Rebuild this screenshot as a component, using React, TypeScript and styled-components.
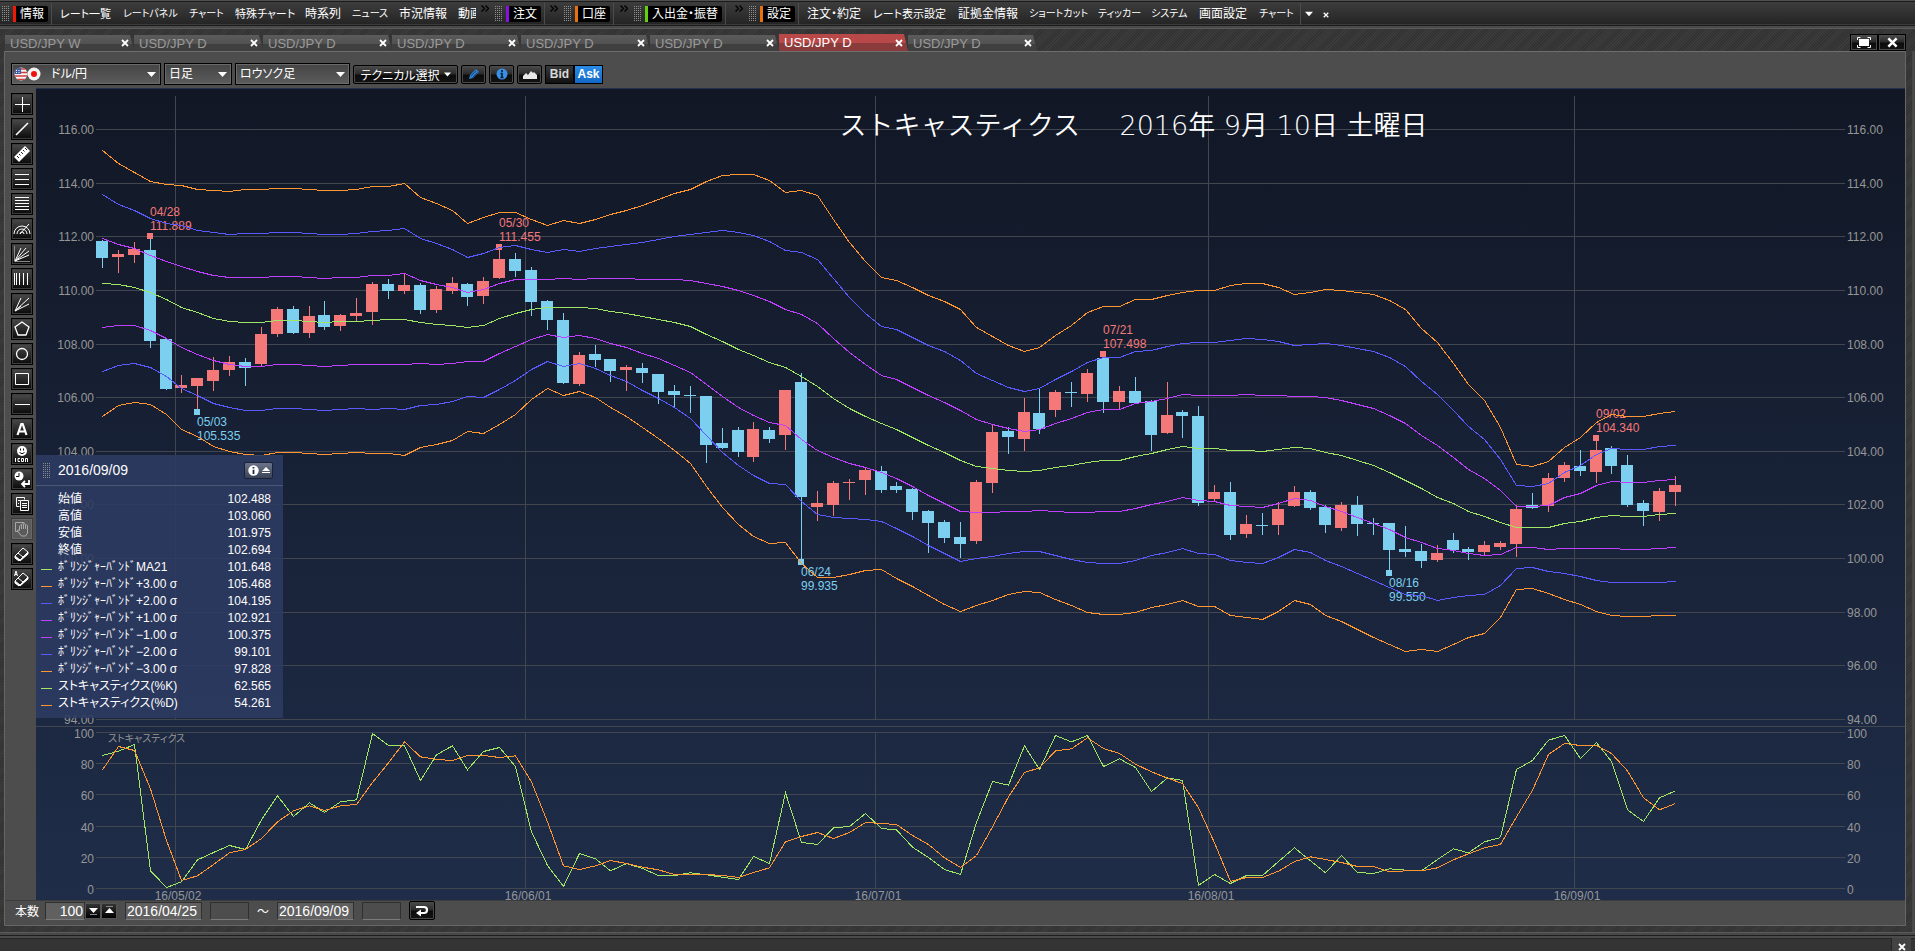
import React, { useLayoutEffect, useRef, useState } from 'react';
import styled, { createGlobalStyle, css } from 'styled-components';

const UI_FONT = '"Liberation Sans", "Noto Sans CJK JP", sans-serif';

const GlobalStyle = createGlobalStyle`
  * { box-sizing: border-box; }
  body {
    margin: 0;
    background: #3a3a3a;
    color: #fff;
    font-family: ${UI_FONT};
    font-size: 12px;
    overflow: hidden;
  }
  button, input, select {
    font-family: inherit;
    font-size: inherit;
    color: inherit;
    margin: 0;
    padding: 0;
    border: 0;
    border-radius: 0;
    background: none;
  }
`;

const hatch = css`
  background: repeating-linear-gradient(135deg, #323232 0 1px, #3c3c3c 1px 2px);
`;

const glossy = css`
  background: linear-gradient(#4b4b4b, #2a2a2a 48%, #0c0c0c 52%, #141414);
  border: 1px solid #000;
  box-shadow: inset 0 0 0 1px #4a4a4a;
`;

const Page = styled.div`
  display: flex;
  flex-direction: column;
  min-height: 100vh;
`;

/* ---------- menu bar ---------- */

const MenuBar = styled.nav`
  display: flex;
  align-items: center;
  height: 28px;
  background: linear-gradient(#505050 0 1px, #1c1c1c 1px 2px, #3d3d3d 2px, #252525 24px, #3a3a3a 24px 25px, #1c1c1c 25px 26px, #4a4a4a 26px);
  padding-bottom: 1px;
`;

const MenuGroup = styled.div<{ $width?: number }>`
  display: flex;
  align-items: center;
  height: 100%;
  width: ${(p) => (p.$width ? `${p.$width}px` : 'auto')};
`;

const Handle = styled.span`
  flex: none;
  width: 7px;
  height: 15px;
  margin: 0 4px 0 2px;
  background: conic-gradient(from 270deg at 1px 1px, #8c8c8c 90deg, transparent 0) 0 0 / 2px 2px;
`;

const GroupTitle = styled.button<{ $accent: string }>`
  flex: none;
  height: 16px;
  padding: 0 4px;
  background: #000;
  border-left: 3px solid ${(p) => p.$accent};
  border-radius: 0 2px 2px 0;
  line-height: 16px;
  font-feature-settings: 'palt';
  white-space: nowrap;
`;

const Divider = styled.span`
  flex: none;
  width: 1px;
  height: 22px;
  margin-left: 3px;
  background: #4c4c4c;
`;

const MenuItems = styled.div`
  display: flex;
  padding-left: 8px;
`;

const MenuItem = styled.button<{ $width: number; $size: number; $clip?: boolean }>`
  width: ${(p) => p.$width}px;
  overflow: ${(p) => (p.$clip ? 'hidden' : 'visible')};
  text-align: left;
  font-size: ${(p) => p.$size}px;
  line-height: 16px;
  white-space: nowrap;
  font-feature-settings: 'palt';
`;

const Chevron = styled.button`
  margin: 0 4px 10px auto;
  width: 8px;
  height: 8px;
  svg { display: block; }
`;

const MenuTail = styled.div`
  display: flex;
  align-items: center;
  gap: 10px;
  padding-left: 4px;
`;

/* ---------- tabs ---------- */

const TabStrip = styled.div`
  ${hatch}
  display: flex;
  align-items: flex-end;
  height: 23px;
  padding: 0 9px 0 5px;
  border-top: 1px solid #5a5a5a;
`;

const Tab = styled.div<{ $active: boolean }>`
  display: flex;
  align-items: center;
  justify-content: space-between;
  width: 129px;
  height: ${(p) => (p.$active ? 17 : 16)}px;
  padding: 0 4px 0 5px;
  color: ${(p) => (p.$active ? '#fff' : '#9a9a9a')};
  background: ${(p) =>
    p.$active
      ? 'linear-gradient(#b94848 0 55%, #8a3c3c 55%)'
      : 'linear-gradient(#5b5b5b, #525252 55%, #3f3f3f 55%)'};
  clip-path: polygon(0 0, calc(100% - 4px) 0, 100% 100%, 0 100%);
  font-size: 13px;
  line-height: 16px;
`;

const TabClose = styled.button`
  width: 9px;
  height: 9px;
  svg { display: block; }
`;

const WindowButtons = styled.div`
  display: flex;
  margin-left: auto;
`;

const WindowButton = styled.button`
  ${glossy}
  display: grid;
  place-items: center;
  width: 28px;
  height: 17px;
`;

/* ---------- main panel ---------- */

const Frame = styled.main`
  ${hatch}
  display: flex;
  flex: 1;
  padding: 0 6px 6px 4px;
  border-right: 3px solid #484848;
`;

const Panel = styled.section`
  display: flex;
  flex: 1;
  flex-direction: column;
  min-width: 0;
  background: #4d4d4d;
  border: 1px solid #666;
  border-top-color: #6e6e6e;
`;

const Toolbar = styled.div`
  display: flex;
  align-items: center;
  gap: 3px;
  height: 36px;
  padding: 11px 6px 3px;
`;

const SelectBox = styled.label<{ $width: number }>`
  position: relative;
  width: ${(p) => p.$width}px;
  height: 22px;
`;

const Select = styled.select<{ $indent: number }>`
  appearance: none;
  width: 100%;
  height: 100%;
  padding: 0 20px 0 ${(p) => p.$indent}px;
  border: 1px solid #000;
  box-shadow: inset 0 0 0 1px #6a6a6a;
  background: linear-gradient(#444, #5c5c5c);
  font-feature-settings: 'palt';
  option { color: #000; }
`;

const SelectArrow = styled.svg`
  position: absolute;
  right: 5px;
  top: 9px;
  pointer-events: none;
`;

const Flags = styled.svg`
  position: absolute;
  left: 3px;
  top: 3px;
  pointer-events: none;
`;

const ToolbarButton = styled.button<{ $width: number }>`
  ${glossy}
  display: flex;
  align-items: center;
  justify-content: center;
  gap: 4px;
  width: ${(p) => p.$width}px;
  height: 19px;
  border-radius: 2px;
  font-feature-settings: 'palt';
  white-space: nowrap;
`;

const PriceSide = styled.div`
  display: flex;
`;

const SideButton = styled.button<{ $on: boolean }>`
  width: 29px;
  height: 19px;
  border: 1px solid #000;
  background: ${(p) => (p.$on ? 'linear-gradient(#2a8be6, #1268c4)' : 'linear-gradient(#3a3a3a, #101010)')};
  color: ${(p) => (p.$on ? '#fff' : '#d8d8d8')};
  font-weight: bold;
  font-size: 12px;
`;

const Workspace = styled.div`
  display: flex;
  flex: 1;
  min-height: 0;
`;

const ToolColumn = styled.div`
  display: flex;
  flex: none;
  flex-direction: column;
  gap: 3px;
  width: 31px;
  padding: 5px 3px 0 6px;
`;

const ToolButton = styled.button<{ $dim?: boolean }>`
  display: grid;
  place-items: center;
  height: 22px;
  border: 1px solid ${(p) => (p.$dim ? '#3c3c3c' : '#000')};
  background: ${(p) => (p.$dim ? '#5a5a5a' : 'linear-gradient(#4a4a4a, #0a0a0a)')};
  box-shadow: inset 0 0 0 1px ${(p) => (p.$dim ? '#686868' : '#3c3c3c')};
  color: ${(p) => (p.$dim ? '#a8a8a8' : '#fff')};
`;

const ChartArea = styled.div`
  position: relative;
  flex: 1;
  min-width: 0;
  border-top: 1px solid #22324e;
  background: linear-gradient(#111725, #1f2d49);
`;

const ChartSvg = styled.svg`
  position: absolute;
  inset: 0;
  font-family: "Liberation Sans", sans-serif;
  font-size: 12px;
`;

/* ---------- data window ---------- */

const DataWindow = styled.aside`
  position: absolute;
  left: 0;
  bottom: 182px;
  width: 247px;
  height: 263px;
  background: rgba(45, 59, 98, 0.9);
`;

const DataHeader = styled.header`
  display: flex;
  align-items: center;
  height: 31px;
  padding: 0 10px 0 5px;
  border-bottom: 1px solid #4d5875;
  font-size: 14px;
`;

const DataDate = styled.span`
  flex: 1;
  padding-left: 4px;
`;

const InfoToggle = styled.button`
  display: flex;
  align-items: center;
  justify-content: center;
  gap: 3px;
  width: 29px;
  height: 17px;
  border: 1px solid #1c2236;
  border-radius: 2px;
  background: linear-gradient(#6b7488, #3a4258);
`;

const DataTable = styled.table`
  width: 242px;
  margin: 5px 0 0 5px;
  border-collapse: collapse;
  tr { height: 17px; }
  th, td { padding: 0; line-height: 17px; }
  th { text-align: left; font-weight: normal; white-space: nowrap; font-feature-settings: 'palt'; }
  td { text-align: right; padding-right: 12px; }
`;

const DataLabel = styled.span`
  display: flex;
  align-items: center;
`;

const Swatch = styled.i<{ $color?: string }>`
  width: 11px;
  height: 1px;
  margin: 4px 6px 0 0;
  background: ${(p) => p.$color ?? 'transparent'};
`;

/* ---------- footer ---------- */

const RangeBar = styled.form`
  display: flex;
  align-items: center;
  gap: 8px;
  height: 25px;
  padding: 0 10px 5px;
  border-top: 1px solid #3c3c3c;
`;

const CountField = styled.div`
  display: flex;
  align-items: center;
`;

const CountLabel = styled.label`
  width: 30px;
`;

const Field = styled.input<{ $width: number; $right?: boolean; $blank?: boolean }>`
  width: ${(p) => p.$width}px;
  height: 18px;
  padding: 0 1px;
  border: 1px solid #303030;
  border-bottom-color: #7a7a7a;
  background: ${(p) => (p.$blank ? '#4d4d4d' : '#606060')};
  text-align: ${(p) => (p.$right ? 'right' : 'left')};
  font-size: 14px;
`;

const Spin = styled.button`
  display: grid;
  place-items: center;
  width: 16px;
  height: 16px;
  border: 1px solid #555;
  background: linear-gradient(#333, #000);
`;

const Tilde = styled.span`
  width: 12px;
  text-align: center;
`;

const ReloadButton = styled.button`
  ${glossy}
  display: grid;
  place-items: center;
  width: 26px;
  height: 19px;
  border-radius: 2px;
`;

const StatusBar = styled.footer`
  display: flex;
  align-items: flex-end;
  justify-content: flex-end;
  height: 19px;
  padding: 6px 4px 0 0;
  background: linear-gradient(#5a5a5a 0 1px, #484848 1px 3px, #1e1e1e 3px 4px, #4a4a4a 4px 6px, #262626 6px 7px, #343434 7px);
`;

const StatusClose = styled.button`
  display: grid;
  place-items: center;
  width: 20px;
  height: 13px;
  padding-top: 4px;
  border-left: 1px solid #262626;
  background: #434343;
`;

/* ---------- chart data ---------- */

type CandleRow = [kind: 'r' | 'f', bodyTop: number, bodyBottom: number, high: number, low: number];

// Levels count steps below the 116.00 line; 1770 steps span 22 yen.
// Each row is [rising or falling, body top, body bottom, high, low].
const candleRows: CandleRow[] = [
  ['f', 333, 384, 330, 413], ['r', 372, 381, 360, 429], ['r', 357, 375, 336, 399], ['f', 360, 633, 318, 654],
  ['f', 627, 777, 624, 780], ['r', 765, 774, 735, 789], ['r', 744, 768, 744, 846], ['r', 720, 753, 681, 783],
  ['r', 696, 720, 678, 738], ['f', 696, 714, 684, 768], ['r', 612, 702, 591, 708], ['r', 537, 612, 531, 621],
  ['f', 537, 609, 528, 612], ['r', 558, 609, 528, 624], ['f', 555, 591, 513, 600], ['r', 555, 588, 552, 603],
  ['r', 549, 558, 504, 573], ['r', 462, 546, 456, 585], ['f', 462, 483, 447, 507], ['r', 465, 483, 429, 492],
  ['f', 465, 540, 459, 552], ['r', 477, 540, 468, 549], ['r', 459, 483, 441, 492], ['f', 462, 501, 459, 528],
  ['r', 453, 498, 441, 522], ['r', 387, 444, 351, 447], ['f', 387, 423, 369, 441], ['f', 420, 516, 411, 558],
  ['f', 513, 570, 510, 600], ['f', 570, 759, 549, 762], ['r', 675, 762, 666, 768], ['f', 672, 690, 645, 711],
  ['f', 687, 723, 687, 756], ['r', 711, 720, 705, 783], ['f', 714, 729, 699, 759], ['f', 732, 786, 732, 822],
  ['f', 783, 795, 765, 834], ['f', 795, 798, 768, 849], ['f', 798, 945, 798, 999], ['f', 939, 954, 894, 957],
  ['f', 900, 966, 891, 981], ['r', 897, 981, 876, 996], ['f', 900, 927, 891, 939], ['r', 780, 915, 780, 960],
  ['f', 756, 1101, 729, 1290], ['r', 1119, 1131, 1083, 1173], ['r', 1059, 1125, 1053, 1158], ['r', 1056, 1059, 1047, 1110],
  ['r', 1020, 1050, 1014, 1095], ['f', 1023, 1080, 1008, 1089], ['f', 1068, 1080, 1056, 1089], ['f', 1077, 1146, 1074, 1170],
  ['f', 1143, 1179, 1140, 1269], ['f', 1176, 1224, 1170, 1239], ['f', 1221, 1242, 1176, 1284], ['r', 1056, 1233, 1050, 1242],
  ['r', 906, 1059, 885, 1089], ['f', 903, 921, 891, 972], ['r', 846, 927, 804, 963], ['f', 849, 897, 774, 912],
  ['r', 786, 840, 780, 861], ['f', 786, 789, 756, 831], ['r', 729, 792, 717, 816], ['f', 684, 816, 675, 849],
  ['r', 783, 816, 768, 837], ['f', 783, 819, 741, 822], ['f', 813, 915, 810, 963], ['r', 855, 909, 756, 912],
  ['f', 846, 858, 840, 924], ['f', 858, 1119, 828, 1128], ['r', 1086, 1107, 1065, 1116], ['f', 1086, 1215, 1056, 1230],
  ['r', 1182, 1212, 1155, 1224], ['f', 1185, 1188, 1149, 1215], ['r', 1137, 1185, 1116, 1215], ['r', 1086, 1128, 1068, 1131],
  ['f', 1086, 1134, 1080, 1140], ['f', 1131, 1185, 1125, 1209], ['r', 1125, 1194, 1116, 1203], ['f', 1125, 1182, 1098, 1218],
  ['f', 1179, 1182, 1164, 1215], ['f', 1179, 1260, 1179, 1320], ['f', 1257, 1266, 1188, 1281], ['f', 1263, 1293, 1242, 1314],
  ['r', 1269, 1290, 1245, 1296], ['f', 1230, 1260, 1209, 1269], ['f', 1257, 1266, 1251, 1290], ['r', 1245, 1266, 1233, 1275],
  ['r', 1239, 1251, 1233, 1260], ['r', 1137, 1242, 1125, 1281], ['f', 1125, 1134, 1089, 1137], ['r', 1044, 1128, 1029, 1146],
  ['r', 1005, 1044, 996, 1056], ['f', 1008, 1023, 960, 1038], ['r', 960, 1026, 924, 1059], ['f', 954, 1008, 948, 1032],
  ['f', 1005, 1125, 975, 1131], ['f', 1119, 1143, 1110, 1188], ['r', 1083, 1146, 1074, 1173], ['r', 1065, 1086, 1038, 1128],
];

const movingAverage = [
  460, 465, 472, 489, 510, 532, 549, 565, 574, 577, 577, 572, 572, 575, 577, 576, 574, 571, 570, 568,
  577, 583, 587, 592, 587, 566, 550, 539, 532, 534, 532, 536, 544, 550, 559, 568, 577, 590, 613, 635,
  658, 677, 697, 713, 741, 771, 805, 835, 859, 882, 898, 922, 946, 969, 993, 1009, 1016, 1021, 1024, 1021,
  1013, 1007, 998, 992, 992, 979, 970, 960, 949, 955, 956, 961, 962, 965, 959, 952, 956, 967, 978, 993,
  1008, 1028, 1052, 1077, 1102, 1122, 1144, 1161, 1178, 1192, 1192, 1192, 1180, 1174, 1162, 1156, 1159, 1159, 1154, 1151,
];

const upperBand = [
  61, 102, 127, 154, 165, 166, 178, 181, 184, 179, 178, 175, 175, 179, 181, 181, 180, 170, 169, 160,
  202, 222, 243, 280, 263, 247, 247, 268, 287, 271, 280, 268, 254, 241, 226, 210, 191, 178, 156, 137,
  133, 135, 152, 187, 181, 198, 268, 337, 396, 444, 451, 474, 496, 514, 540, 592, 619, 648, 664, 654,
  618, 586, 548, 529, 529, 509, 508, 496, 487, 481, 481, 466, 460, 460, 472, 493, 487, 478, 481, 487,
  493, 512, 540, 596, 638, 701, 765, 812, 893, 1005, 1009, 994, 952, 924, 878, 854, 859, 859, 850, 845,
];

// Stochastic levels: 37 is 100 %, 505 is 0 %.
const stochK = [
  106, 93, 73, 452, 502, 485, 419, 397, 376, 388, 299, 227, 289, 248, 277, 245, 239, 40, 76, 76,
  181, 104, 77, 149, 94, 82, 139, 335, 436, 499, 400, 416, 452, 430, 445, 466, 466, 458, 464, 471,
  478, 409, 430, 218, 367, 373, 323, 319, 280, 325, 329, 381, 412, 448, 463, 307, 184, 195, 77, 148,
  46, 65, 46, 139, 116, 142, 214, 173, 181, 496, 463, 490, 466, 466, 424, 383, 422, 458, 406, 457,
  460, 446, 450, 452, 418, 386, 398, 365, 352, 148, 121, 60, 46, 115, 67, 124, 269, 304, 233, 212,
];

const stochD = [
  149, 79, 91, 206, 361, 481, 467, 433, 398, 388, 355, 305, 272, 257, 271, 257, 253, 187, 128, 65,
  110, 118, 121, 106, 106, 112, 107, 185, 305, 437, 448, 437, 421, 430, 441, 449, 463, 463, 463, 466,
  472, 457, 443, 365, 349, 337, 355, 337, 307, 310, 313, 346, 373, 413, 442, 406, 320, 230, 157, 143,
  92, 86, 53, 85, 100, 132, 155, 174, 190, 263, 368, 484, 472, 472, 453, 424, 410, 418, 427, 439,
  439, 455, 452, 452, 443, 419, 401, 383, 373, 290, 210, 103, 70, 76, 76, 100, 152, 233, 269, 250,
];

const RED = '#f47878';
const BLUE = '#7ccfef';
const GREEN = '#a0e664';
const ORANGE = '#ff9632';
const INDIGO = '#5a5aff';
const VIOLET = '#c040ff';
const GRID = '#42464f';
const AXIS = '#969696';

const bandLines = [
  { sigma: 3, color: ORANGE },
  { sigma: 2, color: INDIGO },
  { sigma: 1, color: VIOLET },
  { sigma: -1, color: VIOLET },
  { sigma: -2, color: INDIGO },
  { sigma: -3, color: ORANGE },
];

const extremes = [
  { index: 3, level: 318, date: '04/28', price: '111.889', peak: true },
  { index: 6, level: 846, date: '05/03', price: '105.535', peak: false },
  { index: 25, level: 351, date: '05/30', price: '111.455', peak: true },
  { index: 44, level: 1296, date: '06/24', price: '99.935', peak: false },
  { index: 63, level: 672, date: '07/21', price: '107.498', peak: true },
  { index: 81, level: 1328, date: '08/16', price: '99.550', peak: false },
  { index: 94, level: 924, date: '09/02', price: '104.340', peak: true },
];

const months = [
  { index: 5, label: '16/05/02' },
  { index: 27, label: '16/06/01' },
  { index: 49, label: '16/07/01' },
  { index: 70, label: '16/08/01' },
  { index: 93, label: '16/09/01' },
];

const prices = Array.from({ length: 12 }, (_, i) => 116 - i * 2);
const percents = [100, 80, 60, 40, 20, 0];

function Chart() {
  const ref = useRef<SVGSVGElement>(null);
  const [size, setSize] = useState({ w: 1869, h: 811 });

  useLayoutEffect(() => {
    const host = ref.current?.parentElement;
    if (!host) return;
    const measure = () => setSize({ w: host.clientWidth, h: host.clientHeight });
    measure();
    const observer = new ResizeObserver(measure);
    observer.observe(host);
    return () => observer.disconnect();
  }, []);

  const left = 60;
  const right = size.w - 60;
  const top = 40;
  const bottom = size.h - 181;
  const stochTop = size.h - 168;
  const stochBottom = size.h - 12;
  const firstBar = left + 6;
  const step = (right - 176 - left) / 99;

  const x = (i: number) => Math.round(firstBar + i * step);
  const y = (level: number) => Math.round(top + 1 + (level * (bottom - top)) / 1770);
  const ys = (level: number) => stochTop + ((level - 37) * (stochBottom - stochTop)) / 468;
  const priceY = (price: number) => Math.round(top + ((116 - price) / 22) * (bottom - top));
  const percentY = (v: number) => Math.round(stochBottom - (v * (stochBottom - stochTop)) / 100);
  const line = (values: number[], map: (v: number) => number) =>
    values.map((v, i) => `${x(i) + 0.5},${map(v) + 0.5}`).join(' ');

  return (
    <ChartSvg ref={ref} width={size.w} height={size.h} role="img" aria-label="USD/JPY">
      <g shapeRendering="crispEdges" fill={GRID}>
        {prices.map((p) => (
          <rect key={p} x={left} y={priceY(p)} width={right - left} height="1" />
        ))}
        {percents.map((v) => (
          <rect key={v} x={left} y={percentY(v)} width={right - left} height="1" />
        ))}
        <rect x="0" y={stochTop - 6} width={size.w} height="1" />
        {months.map((m) => (
          <g key={m.label}>
            <rect x={x(m.index) - 6} y="7" width="1" height={bottom - 7} />
            <rect x={x(m.index) - 6} y={stochTop} width="1" height={stochBottom - stochTop} />
          </g>
        ))}
      </g>

      <g fill={AXIS}>
        {prices.map((p) => (
          <g key={p}>
            <text x={left - 2} y={priceY(p) + 5} textAnchor="end">{p.toFixed(2)}</text>
            <text x={right + 2} y={priceY(p) + 5}>{p.toFixed(2)}</text>
          </g>
        ))}
        {percents.map((v) => (
          <g key={v}>
            <text x={left - 2} y={percentY(v) + 6} textAnchor="end">{v}</text>
            <text x={right + 2} y={percentY(v) + 6}>{v}</text>
          </g>
        ))}
        {months.map((m) => (
          <text key={m.label} x={x(m.index) - 3} y={size.h} textAnchor="middle">{m.label}</text>
        ))}
        <text x="72" y={stochTop + 10} fontFamily="Noto Sans CJK JP" fontSize="10" style={{ fontFeatureSettings: '"palt"' }}>
          ストキャスティクス
        </text>
      </g>

      <g shapeRendering="crispEdges">
        {candleRows.map(([kind, bodyTop, bodyBottom, high, low], i) => (
          <g key={i} fill={kind === 'r' ? RED : BLUE}>
            <rect x={x(i)} y={y(high)} width="1" height={y(low) - y(high)} />
            <rect x={x(i) - 6} y={y(bodyTop)} width="12" height={Math.max(1, y(bodyBottom) - y(bodyTop))} />
          </g>
        ))}
      </g>

      {extremes.map((e) => (
        <g key={e.date} fill={e.peak ? RED : BLUE}>
          <rect x={x(e.index) - 3} y={y(e.level) - 3} width="6" height="6" shapeRendering="crispEdges" />
          <text x={x(e.index)} y={y(e.level) + (e.peak ? -20 : 14)}>{e.date}</text>
          <text x={x(e.index)} y={y(e.level) + (e.peak ? -6 : 28)}>{e.price}</text>
        </g>
      ))}

      <g fill="none" strokeWidth="1" shapeRendering="crispEdges">
        {bandLines.map(({ sigma, color }) => (
          <polyline
            key={sigma}
            stroke={color}
            points={line(movingAverage.map((m, i) => m - ((m - upperBand[i]) * sigma) / 3), (v) => y(v - 2))}
          />
        ))}
        <polyline stroke={GREEN} points={line(movingAverage, (v) => y(v - 2))} />
        <polyline stroke={GREEN} points={line(stochK, ys)} />
        <polyline stroke={ORANGE} points={line(stochD, ys)} />
      </g>

      <g fill="#fff" fontSize="27" fontFamily='"DejaVu Sans", "Noto Sans CJK JP"' fontWeight="350">
        <text x={size.w / 2 - 131} y="46">ストキャスティクス</text>
        <text x={size.w / 2 + 149} y="46">2016年 9月 10日 土曜日</text>
      </g>
    </ChartSvg>
  );
}

/* ---------- icons ---------- */

const Cross = ({ size = 8, color = '#fff' }: { size?: number; color?: string }) => (
  <svg width={size} height={size} viewBox="0 0 8 8" stroke={color} strokeWidth="1.8" fill="none">
    <path d="M1 1l6 6M7 1L1 7" />
  </svg>
);

const Guillemet = () => (
  <svg width="8" height="7" viewBox="0 0 8 7" stroke="#000" strokeWidth="1.4" fill="none">
    <path d="M.5.5l3 3-3 3M4.500.5l3 3-3 3" />
  </svg>
);

const Triangle = ({ up, bar, width = 9 }: { up?: boolean; bar?: boolean; width?: number }) => (
  <svg width={width} height={width} viewBox="0 0 9 9" fill="#fff">
    {up ? <path d="M0 7h9L4.500 2z" /> : <path d="M0 2h9L4.500 7z" />}
    {bar && <rect x="1" y={up ? 0 : 8} width="7" height="1" fill="#888" />}
  </svg>
);

const eraser = (
  <>
    <path d="M2 11L10 3l5 4-8 8z" />
    <path d="M2 11v2l4 3 1-1M7 15l8-8v2l-8 7z" fill="currentColor" />
    <path d="M5 8l5 4" />
  </>
);

const toolIcons: { name: string; dim?: boolean; art: React.ReactNode }[] = [
  { name: 'crosshair', art: <path d="M9.500 2v15M2 9.500h15" /> },
  { name: 'trend line', art: <path d="M3 15L15 3" strokeWidth="1.600" /> },
  {
    name: 'ruler',
    art: (
      <>
        <path d="M1 12L12 1l5 5L6 17z" fill="currentColor" stroke="none" />
        <path d="M4 11l2 2M6 9l1.500 1.500M8 7l2 2M10 5l1.500 1.500M12 3l2 2" stroke="#222" />
      </>
    ),
  },
  { name: 'three lines', art: <path d="M2 4.500h14M2 9.500h14M2 14.500h14" /> },
  { name: 'six lines', art: <path d="M2 2.500h14M2 5.500h14M2 8.500h14M2 11.500h14M2 14.500h14" /> },
  { name: 'arcs', art: <path d="M1 14a8 8 0 0 1 16 0M4 14a5 5 0 0 1 10 0M7 14a2 2 0 0 1 4 0M7 14l9-10" /> },
  {
    name: 'gann fan',
    art: (
      <>
        <path d="M1.500 1v15.500H17" stroke="#888" />
        <path d="M2 16L8 3M2 16L13 3M2 16L16 6M2 16l14-6" />
      </>
    ),
  },
  { name: 'vertical lines', art: <path d="M1.500 3v12M3.500 3v12M6.500 3v12M10.500 3v12M14.500 3v12" /> },
  { name: 'fan', art: <path d="M2 16L8 3M2 16L16 3M2 16l14-7M2 16l6-5" /> },
  { name: 'pentagon', art: <path d="M9 2l7 5-3 8H5L2 7z" strokeWidth="1.300" /> },
  { name: 'circle', art: <circle cx="9" cy="9" r="5.500" strokeWidth="1.300" /> },
  { name: 'rectangle', art: <path d="M2.500 3.500h13v11h-13z" /> },
  { name: 'horizontal line', art: <path d="M2 9.500h15" /> },
  { name: 'text', art: <path d="M4.500 15L8.300 4h1.400l3.800 11M6 11.500h6" strokeWidth="2.200" /> },
  {
    name: 'stamp',
    art: (
      <>
        <circle cx="9" cy="6" r="5" fill="currentColor" stroke="none" />
        <path d="M7.500 3.500v2M10.500 3.500v2M6.500 7.500q2.500 2.500 5 0" stroke="#111" />
        <path d="M2.500 13v4M7 13.500H5v3h2M8.500 13.500h2v3h-2zM12.500 17v-3.500h2V17" />
      </>
    ),
  },
  {
    name: 'restore',
    art: (
      <>
        <circle cx="6" cy="6" r="4.500" fill="currentColor" stroke="none" />
        <path d="M6 3v3.500H3" stroke="#111" />
        <path d="M16 10v4H9M12 11l-3 3 3 3" strokeWidth="1.800" />
      </>
    ),
  },
  {
    name: 'copy',
    art: (
      <>
        <path d="M3.500 2.500h8v2M3.500 2.500v9h3M5 5.500h2M5 8.500h1" />
        <path d="M7.500 5.500h8v10h-8zM9 8.500h5M9 10.500h5M9 12.500h5" />
      </>
    ),
  },
  {
    name: 'move',
    dim: true,
    art: (
      <path d="M11 4V2.500H2.500v9H5M6.500 10.500V6q1-1.500 2 0v3V4.500q1-1.500 2 0V9 4.500q1-1.500 2 0V9 5.500q1-1.500 2 0V13l-2 3h-4l-4-5q-.5-2 2-.5" />
    ),
  },
  { name: 'erase', art: eraser },
  {
    name: 'erase all',
    art: (
      <>
        {eraser}
        <path d="M1.500 6l1.500-5 1.500 5M2 4.500h2" />
      </>
    ),
  },
];

const FlagPair = () => (
  <Flags width="27" height="16" viewBox="0 0 27 16">
    <defs>
      <clipPath id="usFlag"><circle cx="7" cy="8" r="6.500" /></clipPath>
    </defs>
    <g clipPath="url(#usFlag)">
      <rect width="14" height="16" fill="#f4f4f4" />
      <path d="M0 3h14M0 6.500h14M0 10h14M0 13.500h14" stroke="#d23a3a" strokeWidth="1.700" />
      <rect width="7" height="8" fill="#3b5ba8" />
      <path d="M2 4.500h1M4.500 4.500h1M2 6.500h1M4.500 6.500h1" stroke="#fff" />
    </g>
    <circle cx="20" cy="8" r="6.500" fill="#f4f4f4" />
    <circle cx="20" cy="8" r="3" fill="#f01010" />
  </Flags>
);

const DownArrow = () => (
  <SelectArrow width="9" height="5" viewBox="0 0 9 5" fill="#fff">
    <path d="M0 0h9L4.500 5z" />
  </SelectArrow>
);

/* ---------- content ---------- */

type Item = { name: string; width: number; size: number; clip?: boolean };

const mainItems: Item[] = [
  { name: 'レート一覧', width: 63, size: 11 },
  { name: 'レートパネル', width: 66, size: 10 },
  { name: 'チャート', width: 46, size: 10 },
  { name: '特殊チャート', width: 70, size: 11 },
  { name: '時系列', width: 47, size: 12 },
  { name: 'ニュース', width: 47, size: 10 },
  { name: '市況情報', width: 59, size: 12 },
  { name: '動画', width: 18, size: 12, clip: true },
];

const settingItems: Item[] = [
  { name: '注文・約定', width: 66, size: 12 },
  { name: 'レート表示設定', width: 85, size: 11 },
  { name: '証拠金情報', width: 71, size: 12 },
  { name: 'ショートカット', width: 69, size: 10 },
  { name: 'ティッカー', width: 53, size: 10 },
  { name: 'システム', width: 48, size: 10 },
  { name: '画面設定', width: 60, size: 12 },
  { name: 'チャート', width: 38, size: 10 },
];

const midGroups = [
  { title: '注文', accent: '#8a10e0', width: 69 },
  { title: '口座', accent: '#e87010', width: 70 },
  { title: '入出金・振替', accent: '#60d010', width: 115 },
];

const tabs = ['USD/JPY W', 'USD/JPY D', 'USD/JPY D', 'USD/JPY D', 'USD/JPY D', 'USD/JPY D', 'USD/JPY D', 'USD/JPY D'];
const activeTab = 6;

const dataRows: { label: string; value: string; color?: string }[] = [
  { label: '始値', value: '102.488' },
  { label: '高値', value: '103.060' },
  { label: '安値', value: '101.975' },
  { label: '終値', value: '102.694' },
  { label: 'ﾎﾞﾘﾝｼﾞｬｰﾊﾞﾝﾄﾞMA21', value: '101.648', color: GREEN },
  { label: 'ﾎﾞﾘﾝｼﾞｬｰﾊﾞﾝﾄﾞ+3.00 σ', value: '105.468', color: ORANGE },
  { label: 'ﾎﾞﾘﾝｼﾞｬｰﾊﾞﾝﾄﾞ+2.00 σ', value: '104.195', color: INDIGO },
  { label: 'ﾎﾞﾘﾝｼﾞｬｰﾊﾞﾝﾄﾞ+1.00 σ', value: '102.921', color: VIOLET },
  { label: 'ﾎﾞﾘﾝｼﾞｬｰﾊﾞﾝﾄﾞ−1.00 σ', value: '100.375', color: VIOLET },
  { label: 'ﾎﾞﾘﾝｼﾞｬｰﾊﾞﾝﾄﾞ−2.00 σ', value: '99.101', color: INDIGO },
  { label: 'ﾎﾞﾘﾝｼﾞｬｰﾊﾞﾝﾄﾞ−3.00 σ', value: '97.828', color: ORANGE },
  { label: 'ストキャスティクス(%K)', value: '62.565', color: GREEN },
  { label: 'ストキャスティクス(%D)', value: '54.261', color: ORANGE },
];

export default function App() {
  const [side, setSide] = useState('Ask');

  return (
    <Page>
      <GlobalStyle />
      <MenuBar>
        <MenuGroup $width={493}>
          <Handle />
          <GroupTitle $accent="#f01808">情報</GroupTitle>
          <Divider />
          <MenuItems>
            {mainItems.map((m) => (
              <MenuItem key={m.name} $width={m.width} $size={m.size} $clip={m.clip}>{m.name}</MenuItem>
            ))}
          </MenuItems>
          <Chevron aria-label="more"><Guillemet /></Chevron>
        </MenuGroup>
        {midGroups.map((g) => (
          <MenuGroup key={g.title} $width={g.width}>
            <Handle />
            <GroupTitle $accent={g.accent}>{g.title}</GroupTitle>
            <Divider />
            <Chevron aria-label="more"><Guillemet /></Chevron>
          </MenuGroup>
        ))}
        <MenuGroup>
          <Handle />
          <GroupTitle $accent="#e87010">設定</GroupTitle>
          <Divider />
          <MenuItems>
            {settingItems.map((m) => (
              <MenuItem key={m.name} $width={m.width} $size={m.size}>{m.name}</MenuItem>
            ))}
          </MenuItems>
          <Divider />
          <MenuTail>
            <button aria-label="expand"><Triangle width={8} /></button>
            <button aria-label="close bar"><Cross size={6} /></button>
          </MenuTail>
        </MenuGroup>
      </MenuBar>

      <TabStrip>
        {tabs.map((name, i) => (
          <Tab key={i} $active={i === activeTab}>
            <button>{name}</button>
            <TabClose aria-label="close tab"><Cross /></TabClose>
          </Tab>
        ))}
        <WindowButtons>
          <WindowButton aria-label="full screen">
            <svg width="14" height="11" viewBox="0 0 14 11" fill="none" stroke="#fff">
              <rect x="2.500" y="2.500" width="9" height="6" fill="#fff" />
              <path d="M.5 3V.5h3M10.500.5h3V3M13.500 8v2.500h-3M3.500 10.500h-3V8" />
            </svg>
          </WindowButton>
          <WindowButton aria-label="close"><Cross size={11} /></WindowButton>
        </WindowButtons>
      </TabStrip>

      <Frame>
        <Panel>
          <Toolbar>
            <SelectBox $width={150}>
              <Select $indent={39} aria-label="通貨ペア"><option>ドル/円</option></Select>
              <FlagPair />
              <DownArrow />
            </SelectBox>
            <SelectBox $width={68}>
              <Select $indent={4} aria-label="足種"><option>日足</option></Select>
              <DownArrow />
            </SelectBox>
            <SelectBox $width={115}>
              <Select $indent={4} aria-label="チャート種類"><option>ロウソク足</option></Select>
              <DownArrow />
            </SelectBox>
            <ToolbarButton $width={105}>
              テクニカル選択
              <Triangle width={7} />
            </ToolbarButton>
            <ToolbarButton $width={25} aria-label="pencil">
              <svg width="12" height="12" viewBox="0 0 12 12">
                <path d="M1 11l1-4 6-6 3 3-6 6z" fill="#2f7fd0" />
                <path d="M3 8l5-5M4.500 9.500l5-5" stroke="#123c70" strokeWidth=".8" />
              </svg>
            </ToolbarButton>
            <ToolbarButton $width={25} aria-label="information">
              <svg width="12" height="12" viewBox="0 0 12 12">
                <circle cx="6" cy="6" r="5.500" fill="#3a90e6" />
                <path d="M6 2v2M4.500 5.500H6V9M4.500 9.500h3" stroke="#0e1a2a" strokeWidth="1.600" fill="none" />
              </svg>
            </ToolbarButton>
            <ToolbarButton $width={25} aria-label="area chart">
              <svg width="16" height="9" viewBox="0 0 16 9" fill="#e8e8e8">
                <path d="M1 9V6l3-3 2 2 3-4 2 2 1-1 3 3v4z" />
              </svg>
            </ToolbarButton>
            <PriceSide>
              {['Bid', 'Ask'].map((name) => (
                <SideButton key={name} $on={side === name} onClick={() => setSide(name)}>{name}</SideButton>
              ))}
            </PriceSide>
          </Toolbar>

          <Workspace>
            <ToolColumn>
              {toolIcons.map((t) => (
                <ToolButton key={t.name} $dim={t.dim} aria-label={t.name}>
                  <svg width="18" height="18" viewBox="0 0 18 18" fill="none" stroke="currentColor">
                    {t.art}
                  </svg>
                </ToolButton>
              ))}
            </ToolColumn>
            <ChartArea>
              <Chart />
              <DataWindow>
                <DataHeader>
                  <Handle />
                  <DataDate>2016/09/09</DataDate>
                  <InfoToggle aria-label="toggle data">
                    <svg width="11" height="11" viewBox="0 0 11 11">
                      <circle cx="5.500" cy="5.500" r="5.200" fill="#fff" />
                      <path d="M5.500 2v1.500M5.500 4.800V9" stroke="#222a40" strokeWidth="1.800" />
                    </svg>
                    <svg width="8" height="8" viewBox="0 0 8 8" fill="#fff"><path d="M0 5l4-4 4 4zM0 6h8v1H0z" /></svg>
                  </InfoToggle>
                </DataHeader>
                <DataTable>
                  <tbody>
                    {dataRows.map((r) => (
                      <tr key={r.label}>
                        <th scope="row"><DataLabel><Swatch $color={r.color} />{r.label}</DataLabel></th>
                        <td>{r.value}</td>
                      </tr>
                    ))}
                  </tbody>
                </DataTable>
              </DataWindow>
            </ChartArea>
          </Workspace>

          <RangeBar onSubmit={(e) => e.preventDefault()}>
            <CountField>
              <CountLabel htmlFor="bars">本数</CountLabel>
              <Field id="bars" $width={40} $right defaultValue="100" />
              <Spin type="button" aria-label="fewer"><Triangle bar /></Spin>
              <Spin type="button" aria-label="more bars"><Triangle up bar /></Spin>
            </CountField>
            <Field $width={77} aria-label="開始日" defaultValue="2016/04/25" />
            <Field $width={39} $blank aria-label="開始時刻" />
            <Tilde>～</Tilde>
            <Field $width={77} aria-label="終了日" defaultValue="2016/09/09" />
            <Field $width={39} $blank aria-label="終了時刻" />
            <ReloadButton aria-label="reload">
              <svg width="14" height="12" viewBox="0 0 14 12" fill="none" stroke="#fff" strokeWidth="2.200">
                <path d="M1 2h8a3 3 0 0 1 0 6H4" />
                <path d="M6 4.500V11.500L1 8z" fill="#fff" stroke="none" />
              </svg>
            </ReloadButton>
          </RangeBar>
        </Panel>
      </Frame>
      <StatusBar>
        <StatusClose aria-label="close ticker"><Cross size={8} /></StatusClose>
      </StatusBar>
    </Page>
  );
}
